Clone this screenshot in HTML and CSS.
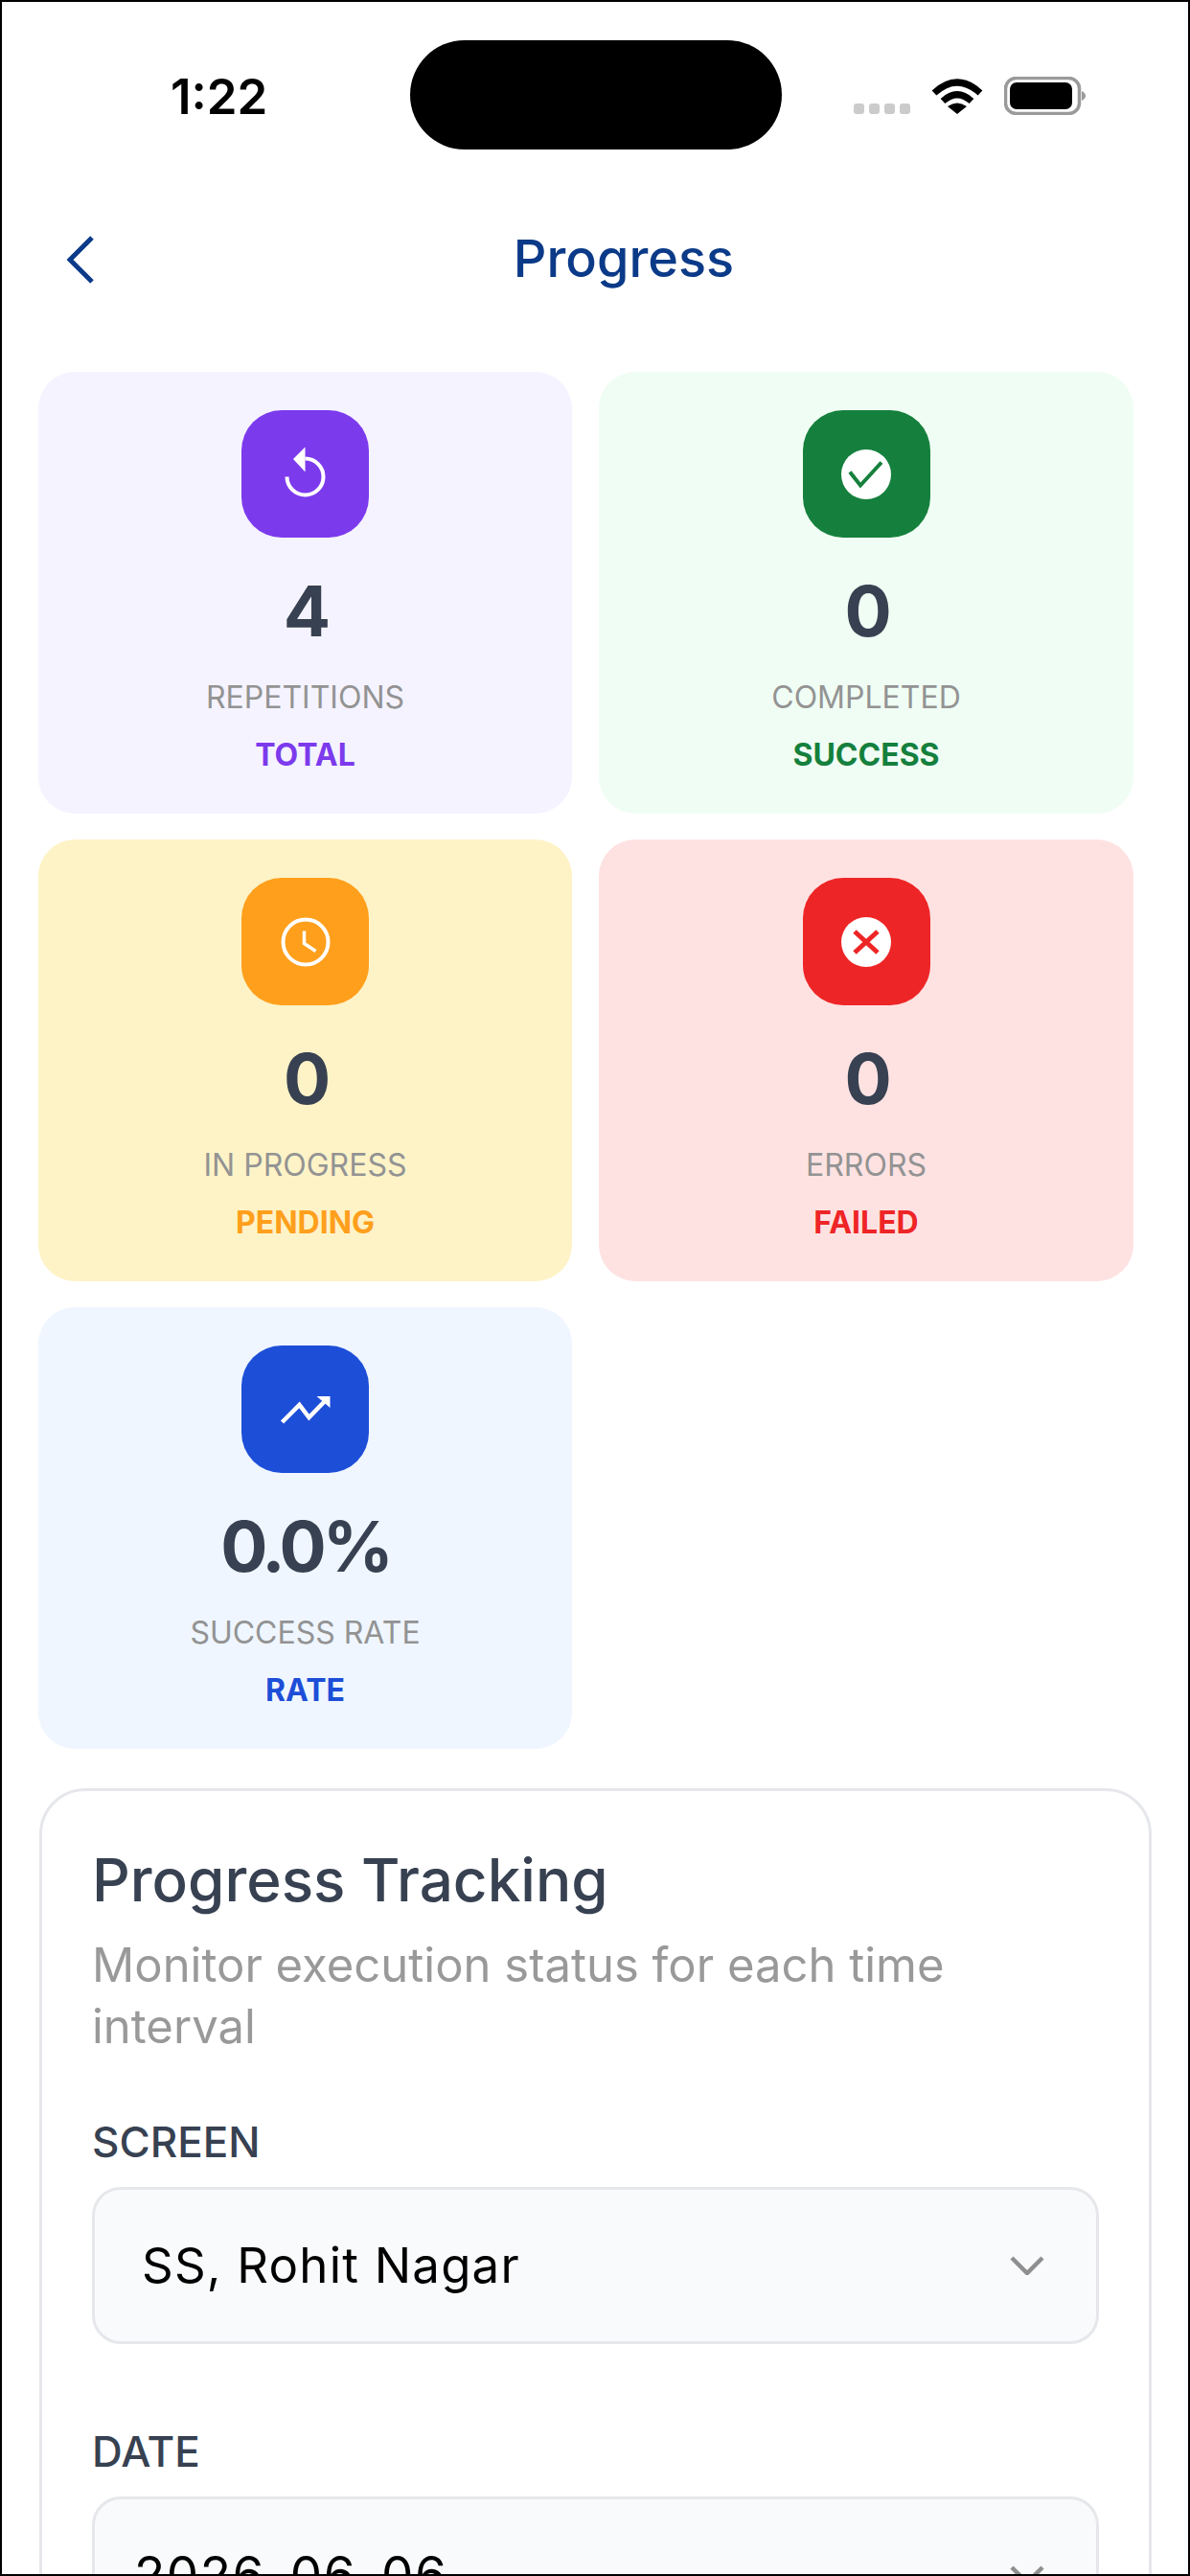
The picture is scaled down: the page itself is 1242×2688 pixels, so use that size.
FILE: index.html
```html
<!DOCTYPE html>
<html lang="en">
<head>
<meta charset="utf-8">
<title>Progress</title>
<link rel="stylesheet" href="styles.css">
</head>
<body>
<div class="screen">
  <div class="status-bar">
    <div class="time">1:22</div>
    <div class="island"></div>
    <div class="status-icons">
      <div class="dots"><i></i><i></i><i></i><i></i></div>
      <svg class="wifi" width="54" height="38" viewBox="0 0 54 38"><path d="M3 16Q27 -6 51 16" fill="none" stroke="#000" stroke-width="7"/><path d="M12 24.500Q27 11 42 24.500" fill="none" stroke="#000" stroke-width="7"/><path d="M17 30Q27 23 37 30L27 38Z" fill="#000"/></svg>
      <svg class="battery" width="85" height="40" viewBox="0 0 85 40"><rect x="1.500" y="1.500" width="77" height="37" rx="11" fill="none" stroke="#9a9a9a" stroke-width="3.500"/><rect x="6" y="6" width="65" height="28" rx="7" fill="#000"/><path d="M81 15Q85 17 85 20Q85 23 81 25Z" fill="#9a9a9a"/></svg>
    </div>
  </div>

  <header class="nav">
    <svg class="back" width="28" height="50" viewBox="0 0 28 50"><path d="M26 2L3 25L26 48" fill="none" stroke="#0b3a88" stroke-width="5"/></svg>
    <h1 class="nav-title">Progress</h1>
  </header>

  <section class="stats">
    <article class="stat stat-purple">
      <div class="stat-icon"><svg width="60" height="60" viewBox="0 0 60 60"><path d="M10.500 32.500A19 19 0 1 0 29.500 13.500" fill="none" stroke="#fff" stroke-width="4"/><path d="M17 14L29.500 1.500V27.500Z" fill="#fff"/></svg></div>
      <div class="stat-value">4</div>
      <div class="stat-label">REPETITIONS</div>
      <div class="stat-tag">TOTAL</div>
    </article>
    <article class="stat stat-green">
      <div class="stat-icon"><svg width="60" height="60" viewBox="0 0 60 60"><circle cx="30" cy="30" r="26" fill="#fff"/><path d="M13 27.500L24 41.500L46 17.500" fill="none" stroke="#15803d" stroke-width="4"/></svg></div>
      <div class="stat-value">0</div>
      <div class="stat-label">COMPLETED</div>
      <div class="stat-tag">SUCCESS</div>
    </article>
    <article class="stat stat-amber">
      <div class="stat-icon"><svg width="60" height="60" viewBox="0 0 60 60"><circle cx="30" cy="30" r="23.500" fill="none" stroke="#fff" stroke-width="4"/><path d="M28.500 18.500V31.500L40.500 39.500" fill="none" stroke="#fff" stroke-width="3.500"/></svg></div>
      <div class="stat-value">0</div>
      <div class="stat-label">IN PROGRESS</div>
      <div class="stat-tag">PENDING</div>
    </article>
    <article class="stat stat-red">
      <div class="stat-icon"><svg width="60" height="60" viewBox="0 0 60 60"><circle cx="30" cy="30" r="26" fill="#fff"/><path d="M18 19L42 41M42 19L18 41" fill="none" stroke="#ee2526" stroke-width="5"/></svg></div>
      <div class="stat-value">0</div>
      <div class="stat-label">ERRORS</div>
      <div class="stat-tag">FAILED</div>
    </article>
    <article class="stat stat-blue">
      <div class="stat-icon"><svg width="60" height="60" viewBox="0 0 60 60"><path d="M5.500 43L23.500 25L33.500 38L52 19" fill="none" stroke="#fff" stroke-width="4.500"/><path d="M41.500 16H55.500V28Z" fill="#fff"/></svg></div>
      <div class="stat-value">0.0%</div>
      <div class="stat-label">SUCCESS RATE</div>
      <div class="stat-tag">RATE</div>
    </article>
  </section>

  <section class="panel">
    <h2 class="panel-title">Progress Tracking</h2>
    <p class="panel-sub">Monitor execution status for each time interval</p>
    <div class="field">
      <div class="field-label">SCREEN</div>
      <div class="select">
        <span class="select-value">SS, Rohit Nagar</span>
        <svg class="caret" width="36" height="20" viewBox="0 0 36 20"><path d="M2 2L18 18L34 2" fill="none" stroke="#8f8f8f" stroke-width="4.500"/></svg>
      </div>
    </div>
    <div class="field">
      <div class="field-label">DATE</div>
      <div class="select select-date">
        <span class="select-value">2026-06-06</span>
        <svg class="caret" width="36" height="20" viewBox="0 0 36 20"><path d="M2 2L18 18L34 2" fill="none" stroke="#8f8f8f" stroke-width="4.500"/></svg>
      </div>
    </div>
  </section>
</div>
</body>
</html>
```

FILE: styles.css
```css
* { box-sizing: border-box; margin: 0; padding: 0; }
html, body { background: #fff; }
body { font-family: "Inter", "Noto Sans", sans-serif; }

.screen {
  width: 1242px;
  height: 2688px;
  border: 2px solid #000;
  background: #fff;
  overflow: hidden;
}

.status-bar {
  height: 172px;
  padding: 40px 0 0 176px;
  display: flex;
  align-items: flex-start;
}
.time {
  margin-top: 31px;
  width: 104px;
  font-size: 51px;
  line-height: 56px;
  font-weight: 600;
  color: #000;
}
.island {
  margin-left: 146px;
  width: 388px;
  height: 114px;
  border-radius: 57px;
  background: #000;
}
.status-icons {
  margin: 38px 0 0 75px;
  display: flex;
  align-items: flex-end;
}
.dots { display: flex; gap: 5px; margin-bottom: 1px; margin-right: 22px; }
.dots i { display: block; width: 11px; height: 11px; border-radius: 3px; background: #cbcbcb; }
.wifi { margin-right: 22px; margin-bottom: 1px; }

.nav {
  height: 214px;
  padding: 72px 36px 0 68px;
  display: flex;
  align-items: flex-start;
}
.back { flex: none; }
.nav-title {
  flex: 1;
  text-align: center;
  margin-top: -8px;
  font-size: 54px;
  line-height: 64px;
  font-weight: 500;
  color: #0b3a88;
}

.stats {
  margin-left: 38px;
  display: grid;
  grid-template-columns: 557px 558px;
  column-gap: 28px;
  row-gap: 27px;
}
.stat {
  height: 461px;
  padding-top: 40px;
  border-radius: 38px;
  display: flex;
  flex-direction: column;
  align-items: center;
}
.stat-icon {
  width: 133px;
  height: 133px;
  border-radius: 42px;
  display: flex;
  align-items: center;
  justify-content: center;
}
.stat-value {
  margin-top: 32px;
  font-size: 73px;
  line-height: 90px;
  font-weight: 700;
  letter-spacing: -4px;
  color: #374151;
}
.stat-label {
  margin-top: 21px;
  font-size: 32px;
  line-height: 48px;
  font-weight: 400;
  color: #939393;
}
.stat-tag {
  margin-top: 12px;
  font-size: 32px;
  line-height: 48px;
  font-weight: 700;
}
.stat-purple { background: #f5f3ff; }
.stat-purple .stat-icon { background: #7c3aed; }
.stat-purple .stat-tag { color: #7c3aed; }
.stat-green { background: #f0fdf4; }
.stat-green .stat-icon { background: #15803d; }
.stat-green .stat-tag { color: #15803d; }
.stat-amber { background: #fef3c7; }
.stat-amber .stat-icon { background: #ff9f1c; }
.stat-amber .stat-tag { color: #ff9f1c; }
.stat-red { background: #fee2e2; }
.stat-red .stat-icon { background: #ee2526; }
.stat-red .stat-tag { color: #ee2526; }
.stat-blue { background: #eff6ff; }
.stat-blue .stat-icon { background: #1d4ed8; }
.stat-blue .stat-tag { color: #1d4ed8; }

.panel {
  margin: 41px 0 0 39px;
  width: 1161px;
  padding: 55px 52px 0 52px;
  border: 3px solid #e5e7eb;
  border-radius: 48px;
}
.panel-title {
  font-size: 62px;
  line-height: 76px;
  font-weight: 500;
  color: #374151;
}
.panel-sub {
  margin-top: 19px;
  font-size: 49px;
  line-height: 64px;
  font-weight: 400;
  color: #999;
}
.field { margin-top: 60px; }
.field + .field { margin-top: 84px; }
.field-label {
  font-size: 44px;
  line-height: 56px;
  font-weight: 500;
  color: #374151;
}
.select {
  margin-top: 19px;
  height: 164px;
  padding: 0 54px 0 49px;
  border: 3px solid #e5e7eb;
  border-radius: 30px;
  background: #f9fafb;
  display: flex;
  align-items: center;
  justify-content: space-between;
}
.select-value {
  font-size: 51px;
  line-height: 60px;
  letter-spacing: 1.2px;
  color: #000;
}
.select-date { padding-left: 41px; }
.select-date .select-value { font-size: 53px; letter-spacing: 1.5px; }
.caret { flex: none; }
```
